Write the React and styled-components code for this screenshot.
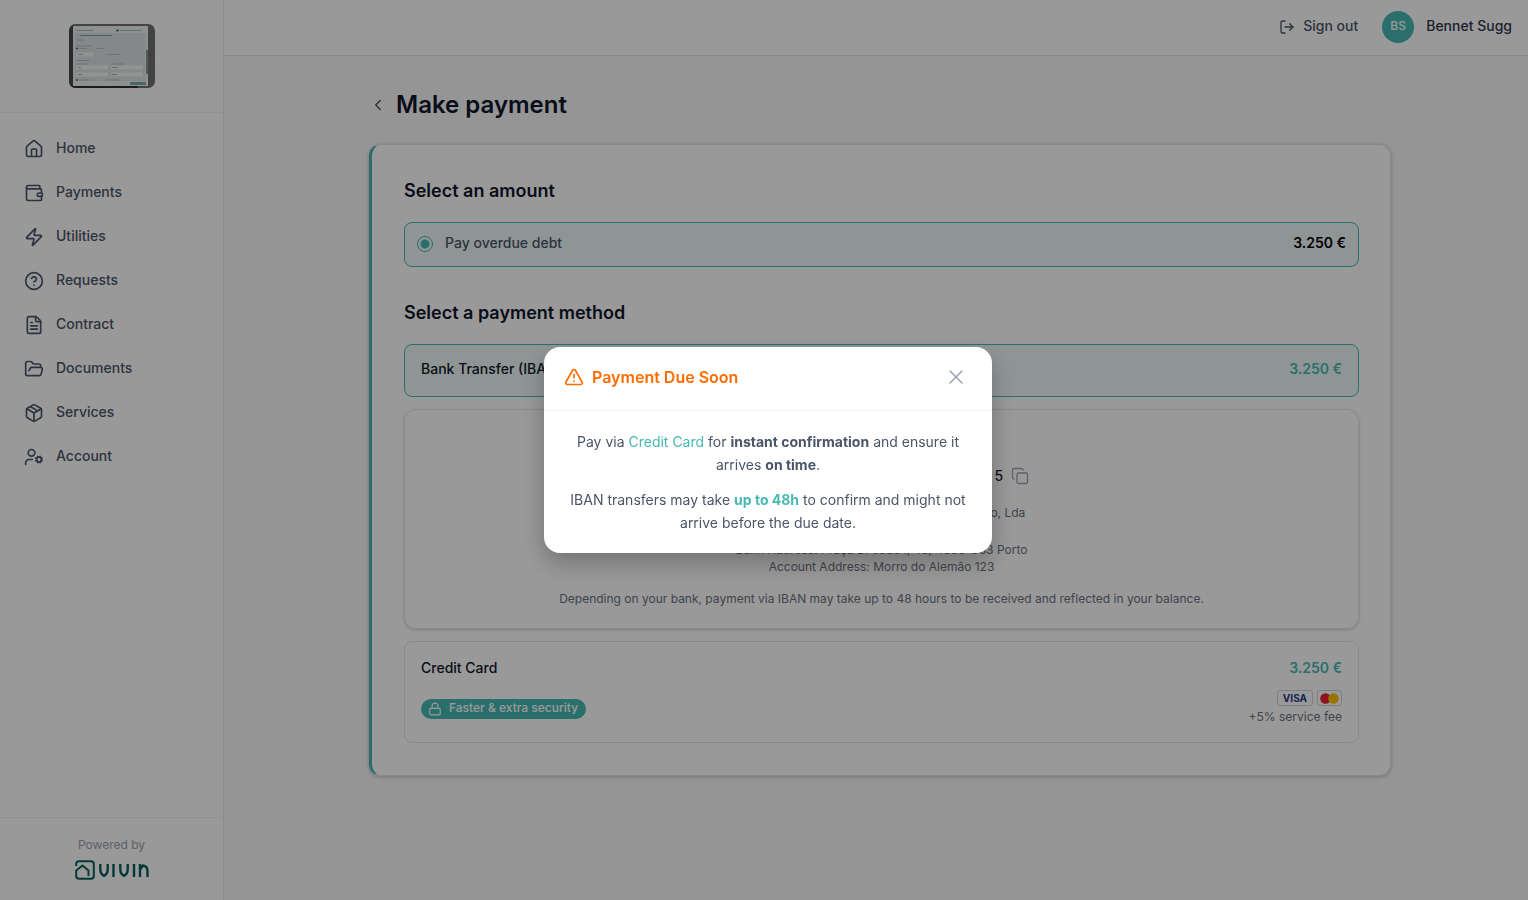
import React from "react";
import styled, { createGlobalStyle } from "styled-components";
import {
    House, Wallet, Zap, CircleHelp, FileText, FolderOpen, Package, UserCog,
    LogOut, ChevronLeft, Copy, Lock, TriangleAlert, X,
} from "lucide-react";

const teal = "#46bab5";
const line = "#e5e7eb";

const GlobalStyle = createGlobalStyle`
    * {
        box-sizing: border-box;
    }
    body {
        margin: 0;
        background: #f8f8f9;
        color: #0f172a;
        font-family: Inter, "Liberation Sans", sans-serif;
        font-size: 14px;
        line-height: 20px;
    }
    h1, h2, p, ul {
        margin: 0;
        padding: 0;
    }
    button {
        border: 0;
        padding: 0;
        background: none;
        font: inherit;
        color: inherit;
        cursor: pointer;
    }
    svg {
        display: block;
        flex-shrink: 0;
    }
`
const Page = styled.div`
    display: flex;
    min-height: 100vh;
`
const Sidebar = styled.aside`
    display: flex;
    flex-direction: column;
    width: 224px;
    flex-shrink: 0;
    background: #fff;
    border-right: 1px solid ${line};
`
const Brand = styled.div`
    display: flex;
    justify-content: center;
    padding: 24px;
    border-bottom: 1px solid #f1f3f5;
`
const NavList = styled.ul`
    flex: 1;
    list-style: none;
    padding: 14px 12px;
`
const NavLink = styled.a`
    display: flex;
    align-items: center;
    gap: 12px;
    height: 44px;
    padding: 0 12px;
    color: #4a5568;
    font-weight: 500;
    text-decoration: none;
`
// labels sit slightly above the middle of their icon
const Label = styled.span`
    display: inline-block;
    padding-bottom: 2px;
`
const Powered = styled.div`
    display: flex;
    flex-direction: column;
    align-items: center;
    gap: 5px;
    padding: 17px 16px 20px;
    border-top: 1px solid #f1f3f5;
    color: #9ca3af;
    font-size: 12px;
`
const Body = styled.div`
    display: flex;
    flex: 1;
    flex-direction: column;
    min-width: 0;
`
const Header = styled.header`
    display: flex;
    align-items: center;
    justify-content: flex-end;
    gap: 24px;
    height: 56px;
    padding: 0 16px 1px;
    background: #fff;
    border-bottom: 1px solid ${line};
    color: #4a5568;
    font-weight: 500;
`
const SignOut = styled.button`
    display: flex;
    align-items: center;
    gap: 8px;
`
const User = styled.div`
    display: flex;
    align-items: center;
    gap: 12px;
    color: #2d3748;
`
const Avatar = styled.span`
    display: flex;
    align-items: center;
    justify-content: center;
    width: 32px;
    height: 32px;
    padding-bottom: 2px;
    border-radius: 50%;
    background: ${teal};
    color: #fff;
    font-size: 12px;
`
const Main = styled.main`
    padding: 33px 32px 32px 40px;
`
const Content = styled.div`
    max-width: 1022px;
    margin: 0 auto;
`
const TitleRow = styled.div`
    display: flex;
    align-items: center;
    gap: 9px;
    margin-bottom: 23px;
    color: #4a5568;
`
const Title = styled.h1`
    color: #0f172a;
    font-size: 24px;
    font-weight: 600;
    line-height: 32px;
`
const Card = styled.section`
    padding: 33px 31px 32px 32px;
    background: #fff;
    border: 1px solid #e2e4f0;
    border-left: 3px solid ${teal};
    border-radius: 12px;
    box-shadow: 0 1px 3px 1px rgba(0, 0, 0, 0.15);
`
const SectionTitle = styled.h2`
    margin-bottom: 18px;
    font-size: 18px;
    font-weight: 600;
    line-height: 26px;
`
const Amount = styled.label`
    display: flex;
    align-items: center;
    gap: 12px;
    height: 45px;
    margin-bottom: 33px;
    padding: 0 12px 1px;
    background: #eff9f9;
    border: 1px solid ${teal};
    border-radius: 8px;
    color: #4a5568;
    font-weight: 500;
`
const Radio = styled.input`
    appearance: none;
    width: 16px;
    height: 16px;
    margin: 0;
    border: 1px solid ${teal};
    border-radius: 50%;
    background: radial-gradient(circle, ${teal} 4px, transparent 5px);
`
const Total = styled.span`
    margin-left: auto;
    color: ${props => props.$accent ? teal : "#000"};
    font-weight: 600;
`
const Method = styled.button`
    display: flex;
    flex-direction: column;
    gap: 12px;
    width: 100%;
    padding: ${props => props.$active ? "14px 16px 17px" : "16px 16px 15px"};
    background: ${props => props.$active ? "#eff9f9" : "#fff"};
    border: 1px solid ${props => props.$active ? teal : line};
    border-radius: 8px;
    text-align: left;
`
const MethodRow = styled.span`
    display: flex;
    align-items: center;
    justify-content: space-between;
    width: 100%;
    font-weight: 500;
`
const Details = styled.div`
    display: flex;
    flex-direction: column;
    align-items: center;
    margin: 12px 0;
    padding: 24px 16px 21px;
    border: 1px solid ${line};
    border-radius: 12px;
    box-shadow: 0 1px 3px rgba(0, 0, 0, 0.2);
    color: #6b7280;
    font-size: 12px;
    line-height: 17px;
    text-align: center;
`
const DetailsTitle = styled.p`
    margin-bottom: 12px;
    font-weight: 500;
    line-height: 20px;
`
const Iban = styled.div`
    display: flex;
    align-items: center;
    gap: 8px;
    margin-bottom: 18px;
    color: #1a202c;
    font-size: 14px;
    font-weight: 500;
    line-height: 20px;
`
const CopyButton = styled.button`
    color: #9ca3af;
`
const Line = styled.p`
    margin-bottom: ${props => props.$gap || 0}px;
`
const Badge = styled.span`
    display: flex;
    align-items: center;
    gap: 7px;
    height: 20px;
    padding: 0 8px 0 7px;
    background: ${teal};
    border-radius: 10px;
    color: #fff;
    font-size: 12px;
`
const Fee = styled.span`
    display: flex;
    flex-direction: column;
    align-items: flex-end;
    gap: 1px;
    color: #6b7280;
    font-size: 12px;
    font-weight: 400;
`
const Brands = styled.span`
    display: flex;
    gap: 4px;
`
const Chip = styled.span`
    display: flex;
    align-items: center;
    height: 16px;
    padding: 0 ${props => props.$wide ? 5 : 2}px;
    border: 1px solid #d1d5db;
    border-radius: 3px;
    color: #1e3a8a;
    font-size: 10px;
    font-weight: 700;
    line-height: 14px;
`
const Overlay = styled.div`
    position: fixed;
    inset: 0;
    display: flex;
    align-items: center;
    justify-content: center;
    padding-left: 8px;
    background: rgba(0, 0, 0, 0.4);
`
const Modal = styled.div`
    width: 448px;
    max-width: 100%;
    background: #fff;
    border-radius: 16px;
    box-shadow: 0 10px 24px rgba(0, 0, 0, 0.25);
`
const ModalHead = styled.div`
    display: flex;
    align-items: center;
    gap: 8px;
    height: 64px;
    padding: 0 24px 3px 20px;
    border-bottom: 1px solid #f3f4f6;
    color: #ff6b00;
`
const ModalTitle = styled.h2`
    flex: 1;
    font-size: 16px;
    font-weight: 600;
    line-height: 24px;
`
const CloseButton = styled.button`
    color: #9ca3af;
`
const ModalBody = styled.div`
    display: flex;
    flex-direction: column;
    gap: 12px;
    padding: 19px 24px;
    color: #4a5568;
    line-height: 23px;
    text-align: center;
`
const Accent = styled.span`
    color: ${teal};
    font-weight: ${props => props.$bold ? 700 : 400};
`

const links = [
    { name: "Home", icon: House },
    { name: "Payments", icon: Wallet },
    { name: "Utilities", icon: Zap },
    { name: "Requests", icon: CircleHelp },
    { name: "Contract", icon: FileText },
    { name: "Documents", icon: FolderOpen },
    { name: "Services", icon: Package },
    { name: "Account", icon: UserCog },
];

// thumbnail of a settings form, cropped by rounded corners
const Thumbnail = () => (
    <svg width="86" height="64" viewBox="0 0 86 64" role="img" aria-label="Company">
        <clipPath id="thumb"><rect width="86" height="64" rx="7" /></clipPath>
        <g clipPath="url(#thumb)">
            <rect width="86" height="64" fill="#707070" />
            <rect width="5" height="64" fill="#484848" />
            <rect y="61" width="69" height="3" fill="#303030" />
            <path d="M79 8h7M79 16h7M79 31h7M79 45h7M79 54h7" stroke="#5c6665" />
            <path d="M4 2h75v60H8q-4 0-4-4z" fill="#e8eeee" />
            <rect x="6" y="9" width="70" height="48" fill="#dce3e3" />
            <path d="M4 2h75v6H4zM4 57h75v5H4z" fill="#eff1f1" />
            <rect x="77" y="26" width="2" height="24" fill="#8d9494" />
            <path d="M7 6.5h17M51 6.5h22M8 16h6M9 36.5h11" stroke="#a9bdbc" />
            <path d="M11 11.5h32" stroke="#7b9f9d" />
            <path d="M47 6.5h3M7 24.5h2M7 56h2" stroke="#3f7472" strokeWidth="1.5" />
            <path d="M8 22h14M10 24.5h8M27 24.5h8M38 30.5h14M8 40h11M42 40h13M10 56h10M36 56h15" stroke="#b5c3c2" />
            <path d="M7 30.5h17M7 43.5h32M42 43.5h32M7 50.5h32M42 50.5h32" stroke="#f4f7f7" strokeWidth="4" />
            <path d="M9 30.5h5M9 43.5h3M43 43.5h6M9 50.5h4M43 50.5h5" stroke="#a9b5b4" />
            <rect x="61" y="58" width="16" height="3" rx="1" fill="#78aaa7" />
        </g>
    </svg>
)

const VivinLogo = () => (
    <svg width="74" height="20" viewBox="0 0 74 20" fill="none" stroke="#08605a" role="img" aria-label="vivin">
        <path d="M1.2 6V4q0-2.8 2.8-2.8h12q2.8 0 2.8 2.8v12q0 2.8-2.8 2.8H4q-2.8 0-2.8-2.8V10.5L7.5 5.5l6 5v5.5" strokeWidth="2" strokeLinejoin="round" />
        <path d="M25.3 4v5.5q0 4.5 3.7 6.300q3.700-1.800 3.700-6.300V4M38.500 4v13M45.300 4v5.500q0 4.500 3.700 6.300q3.700-1.800 3.700-6.300V4M59 4v13M65 4v13M65 9.500l3-4q4.500.5 4.500 5.500v6" strokeWidth="2.400" />
    </svg>
)

const Mastercard = () => (
    <svg width="19" height="11" viewBox="0 0 19 11" role="img" aria-label="Mastercard">
        <circle cx="5.5" cy="5.5" r="5.3" fill="#eb2030" />
        <circle cx="13.5" cy="5.5" r="5.3" fill="#fdc300" />
    </svg>
)

const App = () => {
    return (
        <>
            <GlobalStyle />
            <Page>
                <Sidebar>
                    <Brand><Thumbnail /></Brand>
                    <NavList>
                        {links.map(({ name, icon: Icon }) => (
                            <li key={name}>
                                <NavLink href={"#" + name.toLowerCase()}>
                                    <Icon size={20} strokeWidth={2} />
                                    <Label>{name}</Label>
                                </NavLink>
                            </li>
                        ))}
                    </NavList>
                    <Powered>
                        Powered by
                        <VivinLogo />
                    </Powered>
                </Sidebar>
                <Body>
                    <Header>
                        <SignOut type="button"><LogOut size={16} strokeWidth={2} /><Label>Sign out</Label></SignOut>
                        <User><Avatar>BS</Avatar><Label>Bennet Sugg</Label></User>
                    </Header>
                    <Main>
                        <Content>
                            <TitleRow>
                                <button type="button" aria-label="Back"><ChevronLeft size={18} strokeWidth={2} /></button>
                                <Title>Make payment</Title>
                            </TitleRow>
                            <Card>
                                <SectionTitle>Select an amount</SectionTitle>
                                <Amount>
                                    <Radio type="radio" name="amount" defaultChecked />
                                    <Label>Pay overdue debt</Label>
                                    <Total><Label>3.250 €</Label></Total>
                                </Amount>
                                <SectionTitle>Select a payment method</SectionTitle>
                                <Method type="button" $active>
                                    <MethodRow>Bank Transfer (IBAN)<Total $accent>3.250 €</Total></MethodRow>
                                </Method>
                                <Details>
                                    <DetailsTitle>Transfer to this IBAN</DetailsTitle>
                                    <Iban>
                                        PT50 0000 0000 0000 0000 0000 00 5
                                        <CopyButton type="button" aria-label="Copy IBAN"><Copy size={18} strokeWidth={1.75} /></CopyButton>
                                    </Iban>
                                    <Line $gap={20}>Account holder: Vivin Gestão e Arrendamento, Lda</Line>
                                    <Line>Bank Address: Praça D. João I, 46, 4000-083 Porto</Line>
                                    <Line $gap={15}>Account Address: Morro do Alemão 123</Line>
                                    <Line>Depending on your bank, payment via IBAN may take up to 48 hours to be received and reflected in your balance.</Line>
                                </Details>
                                <Method type="button">
                                    <MethodRow>Credit Card<Total $accent>3.250 €</Total></MethodRow>
                                    <MethodRow>
                                        <Badge><Lock size={14} strokeWidth={2} /><Label>Faster &amp; extra security</Label></Badge>
                                        <Fee>
                                            <Brands><Chip $wide>VISA</Chip><Chip><Mastercard /></Chip></Brands>
                                            +5% service fee
                                        </Fee>
                                    </MethodRow>
                                </Method>
                            </Card>
                        </Content>
                    </Main>
                </Body>
            </Page>
            <Overlay>
                <Modal role="dialog" aria-modal="true" aria-labelledby="due-title">
                    <ModalHead>
                        <TriangleAlert size={20} strokeWidth={2} />
                        <ModalTitle id="due-title">Payment Due Soon</ModalTitle>
                        <CloseButton type="button" aria-label="Close"><X size={24} strokeWidth={1.5} /></CloseButton>
                    </ModalHead>
                    <ModalBody>
                        <p>Pay via <Accent>Credit Card</Accent> for <b>instant confirmation</b> and ensure it arrives <b>on time</b>.</p>
                        <p>IBAN transfers may take <Accent $bold>up to 48h</Accent> to confirm and might not arrive before the due date.</p>
                    </ModalBody>
                </Modal>
            </Overlay>
        </>
    );
}

export default App;
